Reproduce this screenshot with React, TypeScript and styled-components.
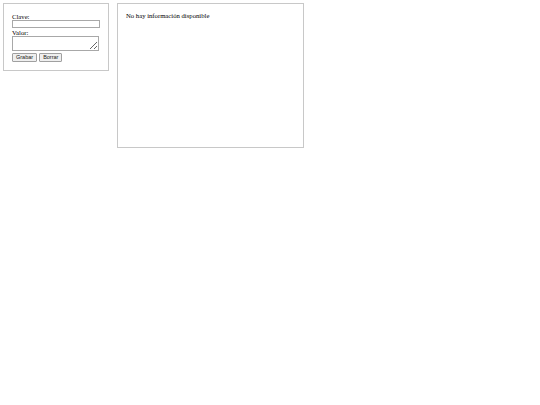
import React from "react";
import styled, { createGlobalStyle } from "styled-components";

const Global = createGlobalStyle`
  html, body { margin: 0; padding: 0; background: #fff; }
  body { font-family: "Liberation Serif", "Times New Roman", serif; font-size: 6.7px; color: #000; }
`;

const Page = styled.div`
  display: flex;
  align-items: flex-start;
  gap: 8px;
  padding: 3px;
`;

const Panel = styled.div<{ $w: number; $h?: number }>`
  box-sizing: border-box;
  width: ${(p) => p.$w}px;
  ${(p) => (p.$h ? `height: ${p.$h}px;` : "")}
  border: 1px solid #c8c8c8;
  padding: 8px;
`;

const Form = styled.form`
  display: flex;
  flex-direction: column;
  align-items: flex-start;
`;

const Label = styled.label`
  display: block;
  line-height: 9px;
  height: 8px;
  margin: 0;
`;

const TextInput = styled.input`
  box-sizing: border-box;
  width: 88px;
  height: 8px;
  margin: 0;
  padding: 0 2px;
  border: 1px solid #a8a8a8;
  font-size: 6px;
  font-family: inherit;
`;

const TextArea = styled.textarea`
  box-sizing: border-box;
  width: 87px;
  height: 15px;
  margin: 0;
  padding: 0 2px;
  border: 1px solid #a8a8a8;
  font-size: 6px;
  resize: both;
  display: block;
`;

const Buttons = styled.div`
  display: flex;
  gap: 2px;
  margin-top: 2px;
`;

const Button = styled.button`
  box-sizing: border-box;
  height: 9px;
  padding: 0 3px;
  border: 1px solid #a0a0a0;
  background: #efefef;
  border-radius: 1px;
  font-family: "Liberation Sans", Arial, sans-serif;
  font-size: 5.5px;
  line-height: 7px;
  color: #222;
`;

const Message = styled.p`
  margin: 0;
  line-height: 8px;
`;

export default function App() {
  return (
    <>
      <Global />
      <Page>
        <Panel $w={106} $h={68}>
          <Form onSubmit={(e) => e.preventDefault()}>
            <Label>Clave:</Label>
            <TextInput type="text" />
            <Label>Valor:</Label>
            <TextArea />
            <Buttons>
              <Button type="button">Grabar</Button>
              <Button type="button">Borrar</Button>
            </Buttons>
          </Form>
        </Panel>
        <Panel $w={187} $h={145}>
          <Message>No hay información disponible</Message>
        </Panel>
      </Page>
    </>
  );
}
